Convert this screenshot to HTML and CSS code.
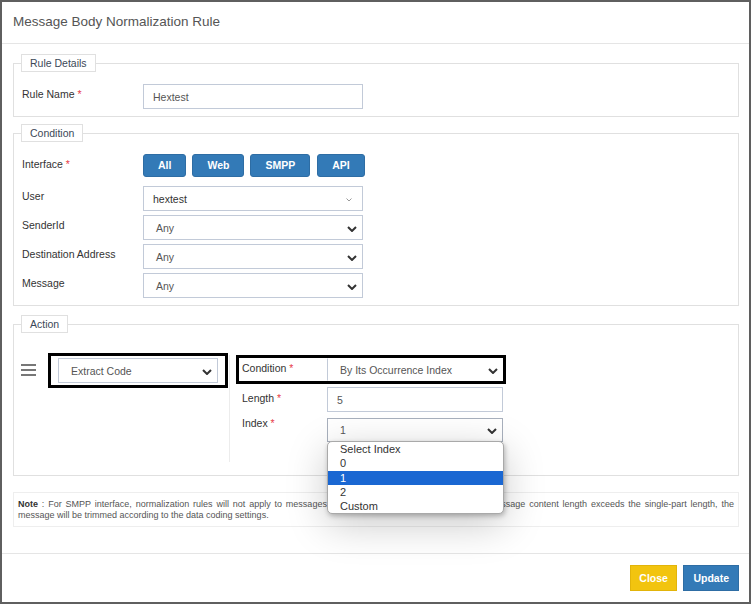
FILE: index.html
```html
<!DOCTYPE html>
<html lang="en">
<head>
<meta charset="utf-8">
<title>Message Body Normalization Rule</title>
<link rel="stylesheet" href="styles.css">
</head>
<body>
<div class="modal">
  <div class="modal-header">
    <h4 class="modal-title">Message Body Normalization Rule</h4>
  </div>
  <div class="modal-body">
    <fieldset class="group group-rule">
      <legend>Rule Details</legend>
      <div class="row">
        <label class="lbl">Rule Name <span class="req">*</span></label>
        <div class="ctl input">Hextest</div>
      </div>
    </fieldset>

    <fieldset class="group group-cond">
      <legend>Condition</legend>
      <div class="row row-btns">
        <label class="lbl">Interface <span class="req">*</span></label>
        <div class="btns">
          <button class="btn btn-blue">All</button>
          <button class="btn btn-blue">Web</button>
          <button class="btn btn-blue">SMPP</button>
          <button class="btn btn-blue">API</button>
        </div>
      </div>
      <div class="row">
        <label class="lbl">User</label>
        <div class="ctl select2"><span>hextest</span>
          <svg class="chev-light" width="6" height="4" viewBox="0 0 6 4"><path d="M0.5 0.5 L3 3 L5.5 0.5" fill="none" stroke="#999" stroke-width="1"/></svg>
        </div>
      </div>
      <div class="row">
        <label class="lbl">SenderId</label>
        <div class="ctl sel"><span>Any</span>
          <svg class="chev" width="10" height="6" viewBox="0 0 10 6"><path d="M1 1 L5 5 L9 1" fill="none" stroke="#333" stroke-width="2"/></svg>
        </div>
      </div>
      <div class="row">
        <label class="lbl">Destination Address</label>
        <div class="ctl sel"><span>Any</span>
          <svg class="chev" width="10" height="6" viewBox="0 0 10 6"><path d="M1 1 L5 5 L9 1" fill="none" stroke="#333" stroke-width="2"/></svg>
        </div>
      </div>
      <div class="row">
        <label class="lbl">Message</label>
        <div class="ctl sel"><span>Any</span>
          <svg class="chev" width="10" height="6" viewBox="0 0 10 6"><path d="M1 1 L5 5 L9 1" fill="none" stroke="#333" stroke-width="2"/></svg>
        </div>
      </div>
    </fieldset>

    <fieldset class="group group-action">
      <legend>Action</legend>
      <div class="action">
        <span class="drag"><i></i><i></i><i></i></span>
        <div class="hl hl-type">
          <div class="ctl sel sel-type"><span>Extract Code</span>
            <svg class="chev" width="10" height="6" viewBox="0 0 10 6"><path d="M1 1 L5 5 L9 1" fill="none" stroke="#333" stroke-width="2"/></svg>
          </div>
        </div>
        <div class="divider"></div>
        <div class="params">
          <div class="prow hl">
            <label class="plbl">Condition <span class="req">*</span></label>
            <div class="ctl sel psel psel-cond"><span>By Its Occurrence Index</span>
              <svg class="chev" width="10" height="6" viewBox="0 0 10 6"><path d="M1 1 L5 5 L9 1" fill="none" stroke="#333" stroke-width="2"/></svg>
            </div>
          </div>
          <div class="prow">
            <label class="plbl plbl-len">Length <span class="req">*</span></label>
            <div class="ctl input pinput">5</div>
          </div>
          <div class="prow">
            <label class="plbl plbl-idx">Index <span class="req">*</span></label>
            <div class="sel-wrap">
              <div class="ctl sel psel psel-idx"><span>1</span>
                <svg class="chev" width="10" height="6" viewBox="0 0 10 6"><path d="M1 1 L5 5 L9 1" fill="none" stroke="#333" stroke-width="2"/></svg>
              </div>
              <ul class="dropdown">
                <li>Select Index</li>
                <li>0</li>
                <li class="active">1</li>
                <li>2</li>
                <li>Custom</li>
              </ul>
            </div>
          </div>
        </div>
      </div>
    </fieldset>

    <div class="note">
      <p class="note-l1"><b>Note</b> : For SMPP interface, normalization rules will not apply to messages with Unicode or binary content. If the message content length exceeds the single-part length, the</p>
      <p>message will be trimmed according to the data coding settings.</p>
    </div>
  </div>
  <div class="modal-footer">
    <button class="btn btn-yellow">Close</button>
    <button class="btn btn-blue btn-update">Update</button>
  </div>
</div>
</body>
</html>
```

FILE: styles.css
```css
* { box-sizing: border-box; }

html, body {
  margin: 0;
  padding: 0;
  background: #fff;
}

body {
  font-family: "Liberation Sans", Arial, sans-serif;
  font-size: 10.5px;
  color: #333;
}

.modal {
  width: 751px;
  height: 604px;
  border: 2px solid #5f5f5f;
  background: #fff;
  display: flex;
  flex-direction: column;
}

.modal-header {
  height: 42px;
  border-bottom: 1px solid #e5e5e5;
  padding: 0 11px;
  display: flex;
  align-items: center;
}

.modal-title {
  margin: 0;
  font-size: 13.5px;
  font-weight: normal;
  color: #555;
  line-height: 16px;
  padding-bottom: 1px;
}

.modal-body {
  flex: 1;
  padding: 10px 10px 0 11px;
}

.group {
  margin: 0;
  border: 1px solid #e0e0e0;
  padding: 12px 8px 7px 7px;
  min-width: 0;
}

.group legend {
  padding: 0 8px;
  border: 1px solid #e0e0e0;
  height: 18px;
  line-height: 16px;
  color: #3b4857;
  font-size: 10.5px;
}

.group-cond {
  margin-top: 7px;
  padding-top: 12px;
  padding-bottom: 7px;
}

.group-action {
  margin-top: 9px;
  padding-top: 20px;
  padding-bottom: 13px;
}

.row {
  display: flex;
  align-items: flex-start;
  margin-bottom: 4px;
}

.row:last-child { margin-bottom: 0; }

.row-btns { margin-bottom: 9px; }

.lbl {
  width: 122px;
  flex: none;
  padding-left: 1px;
  padding-top: 3px;
  line-height: 15px;
  color: #333;
}

.req { color: #e73d4a; }

.ctl {
  width: 220px;
  height: 25px;
  border: 1px solid #c2cad8;
  background: #fff;
  display: flex;
  align-items: center;
  color: #555;
  position: relative;
}

.input { padding-left: 9px; }

.select2 { padding-left: 9px; color: #333; }

.sel { padding-left: 12px; }

.chev {
  position: absolute;
  right: 5px;
  top: 50%;
  margin-top: -2px;
}

.chev-light {
  position: absolute;
  right: 10px;
  top: 50%;
  margin-top: -1px;
}

.btns {
  display: flex;
  gap: 6px;
}

.btn {
  font-family: "Liberation Sans", Arial, sans-serif;
  font-size: 10.5px;
  font-weight: bold;
  color: #fff;
  height: 23px;
  padding: 0 14px;
  border-radius: 3px;
  cursor: pointer;
  line-height: 21px;
}

.btn-blue {
  background: #337ab7;
  border: 1px solid #2e6da4;
}

.btns .btn:last-child { margin-left: 1px; }

/* Action */
.action {
  display: flex;
  align-items: flex-start;
}

.drag {
  width: 15px;
  margin-top: 11px;
  display: flex;
  flex-direction: column;
  gap: 3px;
  flex: none;
}

.drag i {
  display: block;
  height: 2px;
  background: #777;
}

.hl {
  border: 3px solid #000;
}

.hl-type {
  margin-left: 12px;
  width: 180px;
  padding: 2px 7px;
}

.sel-type {
  width: 160px;
  height: 25px;
}

.divider {
  width: 1px;
  height: 107px;
  margin-top: 2px;
  margin-left: 1px;
  background: #ececec;
}

.params {
  margin-top: 2px;
  margin-left: 6px;
  width: 270px;
}

.prow {
  display: flex;
  align-items: flex-start;
  border: 3px solid transparent;
}

.prow.hl { border-color: #000; }

.plbl {
  width: 88px;
  flex: none;
  padding-left: 3px;
  padding-top: 3px;
  line-height: 15px;
}

.plbl-len { padding-top: 4px; }
.plbl-idx { padding-top: 0; margin-top: -2px; }

.psel, .pinput {
  width: 176px;
}

.psel-cond {
  height: 23px;
  border-right: none;
  border-top-color: #fff;
  border-bottom-color: #fff;
}

.pinput { height: 25px; }

.psel-idx { height: 24px; border-color: #a8b0bd; }

.sel-wrap {
  position: relative;
}

.dropdown {
  position: absolute;
  left: 0;
  top: 100%;
  margin: -1px 0 0 0;
  width: 177px;
  padding: 0;
  list-style: none;
  background: #fff;
  border: 1px solid #a9a9a9;
  border-radius: 5px;
  box-shadow: 0 10px 40px rgba(0, 0, 0, 0.22), 1px 2px 5px rgba(0, 0, 0, 0.25);
  overflow: hidden;
  z-index: 5;
  font-size: 11px;
  color: #333;
}

.dropdown li {
  height: 14.25px;
  line-height: 14.25px;
  padding-left: 12px;
}

.dropdown li.active {
  background: #1a67d2;
  color: #fff;
}

/* Note */
.note {
  margin-top: 16px;
  border: 1px solid #eee;
  padding: 6px 4px 5px 4px;
  font-size: 9px;
  line-height: 11px;
  color: #555;
}

.note p { margin: 0; }

.note b { color: #333; }

.note-l1 {
  text-align: justify;
  text-align-last: justify;
}

/* Footer */
.modal-footer {
  border-top: 1px solid #e5e5e5;
  padding: 11px 10px 11px 0;
  display: flex;
  justify-content: flex-end;
  gap: 6px;
}

.modal-footer .btn {
  height: 26px;
  line-height: 24px;
  border-radius: 0;
  padding: 0 9px;
}

.modal-footer .btn-yellow { padding: 0 8.5px; }

.btn-yellow {
  background: #f2c40f;
  border: 1px solid #e2b40a;
}
```
